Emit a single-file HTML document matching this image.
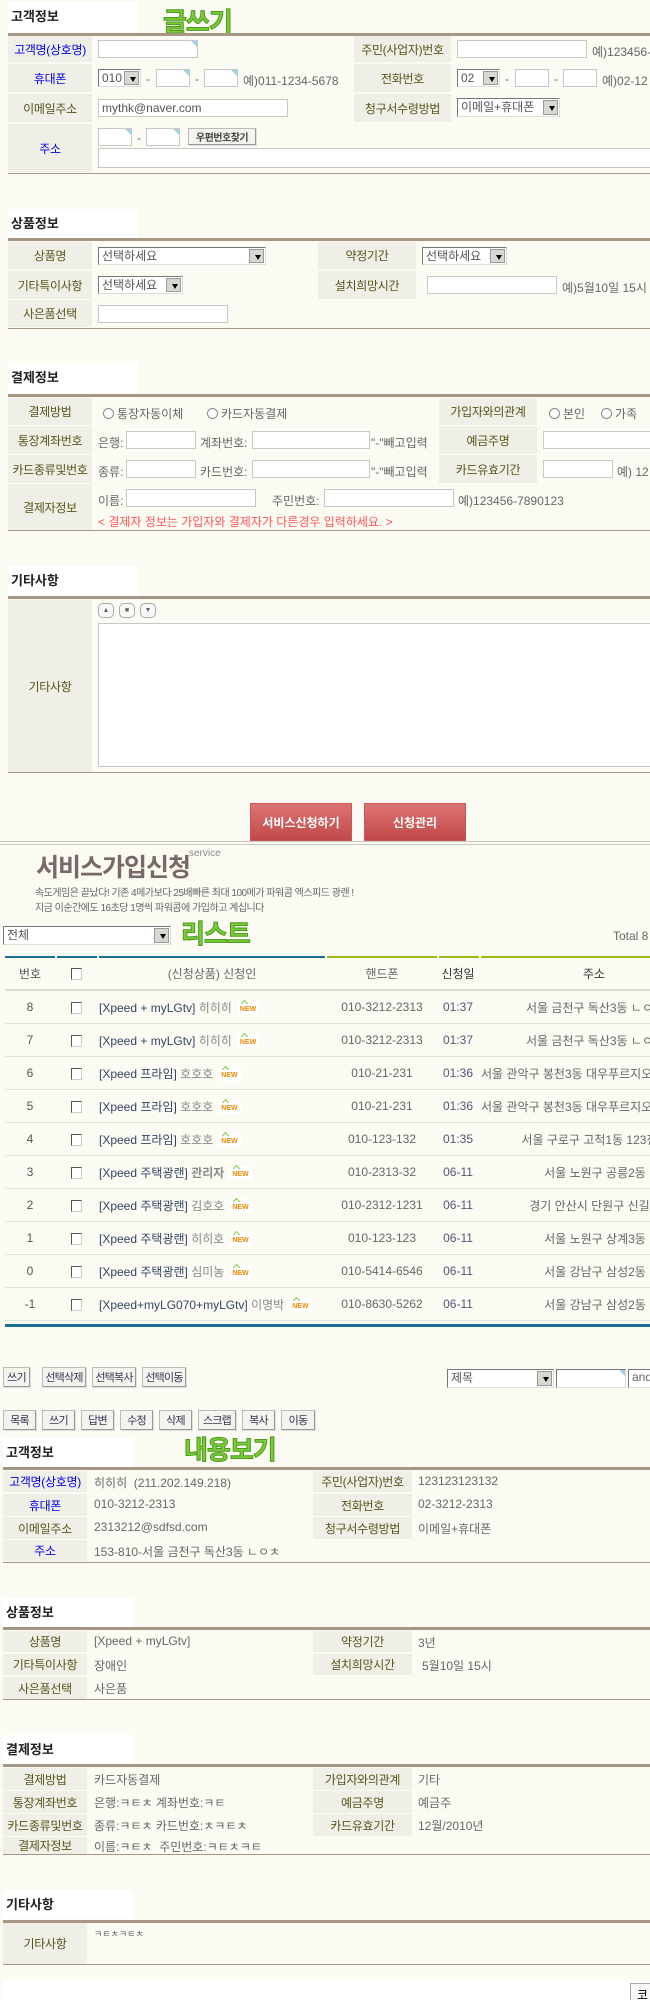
<!DOCTYPE html>
<html><head><meta charset="utf-8">
<style>
*{margin:0;padding:0;box-sizing:border-box}
html,body{width:650px;height:2000px;overflow:hidden}
body{background:#fbfbf3;position:relative;font-family:"Liberation Sans","Noto Sans CJK KR",sans-serif;font-size:12px;color:#666}
.a{position:absolute;white-space:nowrap}
.lab{position:absolute;background:#efefe8;color:#55551a;display:flex;align-items:center;justify-content:center;font-size:12px;white-space:nowrap;letter-spacing:-0.3px}
.blue{color:#0000ee}
.tb{position:absolute;background:#fff;font-weight:bold;color:#222;font-size:13px;padding:4px 0 0 3px}
.ln{position:absolute;left:8px;right:0;height:3px;background:#a89684}
.bl{position:absolute;left:8px;right:0;height:1px;background:#a89684}
.in{position:absolute;background:#fff;border:1px solid #c8c8c8}
.in.c::after{content:"";position:absolute;right:0;top:0;border-top:6px solid #9cd3ea;border-left:6px solid transparent}
.sel{position:absolute;background:#fff;border:1px solid #777;border-right-color:#ddd;border-bottom-color:#ddd;font-size:12px;color:#555;padding:1px 3px;line-height:14px;overflow:hidden;white-space:nowrap}
.sel::after{content:"";position:absolute;right:1px;top:1px;bottom:1px;width:13px;background:#d8d8d0;border:1px solid #999}
.sel i{position:absolute;right:4px;top:7px;z-index:2;border-top:5px solid #000;border-left:3px solid transparent;border-right:3px solid transparent}
.g{position:absolute;font-weight:bold;color:#7bcb3c;font-size:26px;-webkit-text-stroke:1px #4a9a1a;letter-spacing:-1px;line-height:28px}
.rad{display:inline-block;width:11px;height:11px;border-radius:50%;border:1px solid #888;background:#fff;vertical-align:-1px;margin-right:3px}
.btn{position:absolute;background:#f4f4ee;border:1px solid #bbb;border-right-color:#999;border-bottom-color:#999;color:#335;font-size:11px;letter-spacing:-0.8px;white-space:nowrap;display:flex;align-items:center;justify-content:center;box-shadow:1px 1px 0 #ddd;overflow:hidden}
.rb{position:absolute;background:linear-gradient(#dc7474,#c24848);color:#fff;font-weight:bold;font-size:12px;display:flex;align-items:center;justify-content:center;border:1px solid #c55}
.row{position:absolute;left:5px;width:710px;height:33px;border-bottom:1px solid #e2e2dc;display:flex;align-items:center;font-size:12px}
.row div{flex:none;white-space:nowrap;overflow:hidden}
.c1{width:50px;text-align:center;color:#555}
.c2{width:42px;text-align:center}
.c3{width:230px;padding-left:2px;color:#334466}
.c4{width:110px;text-align:center;color:#666}
.c5{width:42px;text-align:center;color:#557}
.c6{width:232px;text-align:center;color:#666}
.cb{display:inline-block;width:11px;height:12px;border:1px solid #555;border-right-color:#ccc;border-bottom-color:#ccc;background:#fff;vertical-align:middle}
.nm{color:#888}
.new{display:inline-block;background:#fff;color:#f08800;font-size:7px;font-weight:bold;padding:5px 3px 1px;margin-left:5px;position:relative;vertical-align:middle;line-height:8px}
.new::before{content:"";position:absolute;left:5px;top:0;width:4px;height:4px;border-top:1px solid #7c3;border-left:1px solid #7c3;transform:rotate(45deg)}
.v{position:absolute;color:#666;white-space:nowrap}
</style></head><body>

<div class="tb" style="left:8px;top:2px;width:130px;height:31px">고객정보</div>
<div class="g" style="left:163px;top:8px">글쓰기</div>
<div class="ln" style="top:33px"></div>
<div class="lab blue" style="left:8px;top:36px;width:84px;height:26px">고객명(상호명)</div>
<div class="lab blue" style="left:8px;top:64px;width:84px;height:28px">휴대폰</div>
<div class="lab" style="left:8px;top:94px;width:84px;height:28px">이메일주소</div>
<div class="lab blue" style="left:8px;top:124px;width:84px;height:48px">주소</div>
<div class="lab" style="left:354px;top:36px;width:97px;height:26px">주민(사업자)번호</div>
<div class="lab" style="left:354px;top:64px;width:97px;height:28px">전화번호</div>
<div class="lab" style="left:354px;top:94px;width:97px;height:28px">청구서수령방법</div>
<div class="in c" style="left:98px;top:40px;width:100px;height:18px"></div>
<div class="in" style="left:457px;top:40px;width:130px;height:18px"></div>
<div class="a" style="left:592px;top:43px">예)123456-</div>
<div class="sel" style="left:98px;top:69px;width:43px;height:18px">010<i></i></div>
<div class="a" style="left:146px;top:72px">-</div>
<div class="in c" style="left:156px;top:69px;width:34px;height:18px"></div>
<div class="a" style="left:195px;top:72px">-</div>
<div class="in c" style="left:204px;top:69px;width:34px;height:18px"></div>
<div class="a" style="left:243px;top:72px">예)011-1234-5678</div>
<div class="sel" style="left:457px;top:69px;width:43px;height:18px">02<i></i></div>
<div class="a" style="left:505px;top:72px">-</div>
<div class="in" style="left:515px;top:69px;width:34px;height:18px"></div>
<div class="a" style="left:554px;top:72px">-</div>
<div class="in" style="left:563px;top:69px;width:34px;height:18px"></div>
<div class="a" style="left:602px;top:72px">예)02-12</div>
<div class="in" style="left:98px;top:99px;width:190px;height:18px;color:#555;padding-left:3px;line-height:16px">mythk@naver.com</div>
<div class="sel" style="left:457px;top:98px;width:103px;height:19px">이메일+휴대폰<i></i></div>
<div class="in c" style="left:98px;top:128px;width:34px;height:18px"></div>
<div class="a" style="left:137px;top:131px">-</div>
<div class="in c" style="left:146px;top:128px;width:34px;height:18px"></div>
<div class="btn" style="left:188px;top:128px;width:68px;height:17px;font-size:10px;font-weight:bold;color:#444;letter-spacing:-0.5px">우편번호찾기</div>
<div class="in" style="left:98px;top:148px;width:560px;height:20px"></div>
<div class="bl" style="top:173px"></div>

<div class="tb" style="left:8px;top:209px;width:130px;height:29px">상품정보</div>
<div class="ln" style="top:238px"></div>
<div class="lab" style="left:8px;top:242px;width:84px;height:27px">상품명</div>
<div class="lab" style="left:8px;top:271px;width:84px;height:28px">기타특이사항</div>
<div class="lab" style="left:8px;top:300px;width:84px;height:27px">사은품선택</div>
<div class="lab" style="left:318px;top:242px;width:98px;height:27px">약정기간</div>
<div class="lab" style="left:318px;top:271px;width:98px;height:28px">설치희망시간</div>
<div class="sel" style="left:98px;top:247px;width:168px;height:18px">선택하세요<i></i></div>
<div class="sel" style="left:422px;top:247px;width:85px;height:18px">선택하세요<i></i></div>
<div class="sel" style="left:98px;top:276px;width:85px;height:18px">선택하세요<i></i></div>
<div class="in" style="left:427px;top:276px;width:130px;height:18px"></div>
<div class="a" style="left:562px;top:279px">예)5월10일 15시</div>
<div class="in" style="left:98px;top:305px;width:130px;height:18px"></div>
<div class="bl" style="top:328px"></div>

<div class="tb" style="left:8px;top:363px;width:130px;height:31px">결제정보</div>
<div class="ln" style="top:394px"></div>
<div class="lab" style="left:8px;top:398px;width:84px;height:27px">결제방법</div>
<div class="lab" style="left:8px;top:426px;width:84px;height:28px">통장계좌번호</div>
<div class="lab" style="left:8px;top:455px;width:84px;height:28px">카드종류및번호</div>
<div class="lab" style="left:8px;top:484px;width:84px;height:46px">결제자정보</div>
<div class="lab" style="left:439px;top:398px;width:98px;height:27px">가입자와의관계</div>
<div class="lab" style="left:439px;top:426px;width:98px;height:28px">예금주명</div>
<div class="lab" style="left:439px;top:455px;width:98px;height:28px">카드유효기간</div>
<div class="a" style="left:103px;top:405px"><span class="rad"></span>통장자동이체</div>
<div class="a" style="left:207px;top:405px"><span class="rad"></span>카드자동결제</div>
<div class="a" style="left:549px;top:405px"><span class="rad"></span>본인</div>
<div class="a" style="left:601px;top:405px"><span class="rad"></span>가족</div>
<div class="a" style="left:98px;top:434px">은행:</div>
<div class="in" style="left:126px;top:431px;width:70px;height:18px"></div>
<div class="a" style="left:200px;top:434px">계좌번호:</div>
<div class="in" style="left:252px;top:431px;width:118px;height:18px"></div>
<div class="a" style="left:371px;top:434px">"-"빼고입력</div>
<div class="in" style="left:543px;top:431px;width:120px;height:18px"></div>
<div class="a" style="left:98px;top:463px">종류:</div>
<div class="in" style="left:126px;top:460px;width:70px;height:18px"></div>
<div class="a" style="left:200px;top:463px">카드번호:</div>
<div class="in" style="left:252px;top:460px;width:118px;height:18px"></div>
<div class="a" style="left:371px;top:463px">"-"빼고입력</div>
<div class="in" style="left:543px;top:460px;width:70px;height:18px"></div>
<div class="a" style="left:617px;top:463px">예) 12</div>
<div class="a" style="left:98px;top:492px">이름:</div>
<div class="in" style="left:126px;top:489px;width:130px;height:18px"></div>
<div class="a" style="left:272px;top:492px">주민번호:</div>
<div class="in" style="left:324px;top:489px;width:130px;height:18px"></div>
<div class="a" style="left:458px;top:492px">예)123456-7890123</div>
<div class="a" style="left:98px;top:513px;color:#ff5555">&lt; 결제자 정보는 가입자와 결제자가 다른경우 입력하세요. &gt;</div>
<div class="bl" style="top:530px"></div>

<div class="tb" style="left:8px;top:566px;width:130px;height:31px">기타사항</div>
<div class="ln" style="top:596px"></div>
<div class="lab" style="left:8px;top:600px;width:84px;height:172px">기타사항</div>
<div class="a" style="left:98px;top:603px;width:16px;height:15px;border:1px solid #aaa;border-radius:5px;background:#f8f8f8;font-size:7px;text-align:center;line-height:13px;color:#666">▲</div>
<div class="a" style="left:119px;top:603px;width:16px;height:15px;border:1px solid #aaa;border-radius:5px;background:#f8f8f8;font-size:7px;text-align:center;line-height:13px;color:#666">■</div>
<div class="a" style="left:140px;top:603px;width:16px;height:15px;border:1px solid #aaa;border-radius:5px;background:#f8f8f8;font-size:7px;text-align:center;line-height:13px;color:#666">▼</div>
<div class="in" style="left:98px;top:623px;width:560px;height:144px"></div>
<div class="bl" style="top:772px"></div>

<div class="rb" style="left:250px;top:803px;width:102px;height:38px">서비스신청하기</div>
<div class="rb" style="left:364px;top:803px;width:102px;height:38px">신청관리</div>

<div class="a" style="left:0;top:841px;width:650px;height:4px;border-top:1px solid #c8c8c0;border-bottom:1px solid #c8c8c0"></div>
<div class="a" style="left:36px;top:848px;font-size:25px;font-weight:bold;color:#7a6868;letter-spacing:-1px">서비스가입신청</div>
<div class="a" style="left:189px;top:848px;font-size:10px;color:#888">service</div>
<div class="a" style="left:35px;top:884px;font-size:10px;color:#666;letter-spacing:-0.5px">속도게임은 끝났다! 기존 4메가보다 25배빠른 최대 100메가 파워콤 엑스피드 광랜 !</div>
<div class="a" style="left:35px;top:899px;font-size:10px;color:#666;letter-spacing:-0.5px">지금 이순간에도 16초당 1명씩 파워콤에 가입하고 계십니다</div>
<div class="sel" style="left:3px;top:926px;width:168px;height:19px">전체<i></i></div>
<div class="g" style="left:181px;top:920px">리스트</div>
<div class="a" style="left:613px;top:929px;color:#666">Total 8</div>
<div class="a" style="left:5px;top:956px;width:50px;height:2px;background:#1c6f94"></div>
<div class="a" style="left:57px;top:956px;width:40px;height:2px;background:#1c6f94"></div>
<div class="a" style="left:99px;top:956px;width:226px;height:2px;background:#1c6f94"></div>
<div class="a" style="left:327px;top:956px;width:110px;height:2px;background:#9dba16"></div>
<div class="a" style="left:439px;top:956px;width:40px;height:2px;background:#9dba16"></div>
<div class="a" style="left:481px;top:956px;width:170px;height:2px;background:#9dba16"></div>
<div class="row" style="top:958px;height:33px;border-bottom:2px solid #dcdcd6">
<div class="c1">번호</div><div class="c2"><span class="cb"></span></div><div class="c3" style="text-align:center;color:#666;padding:0">(신청상품) 신청인</div><div class="c4">핸드폰</div><div class="c5" style="color:#333">신청일</div><div class="c6" style="color:#333;width:230px">주소</div></div>

<div class="row" style="top:991px"><div class="c1">8</div><div class="c2"><span class="cb"></span></div><div class="c3">[Xpeed + myLGtv] <span class="nm">히히히</span><span class="new">NEW</span></div><div class="c4">010-3212-2313</div><div class="c5">01:37</div><div class="c6">서울 금천구 독산3동 ㄴㅇㅊ</div></div>
<div class="row" style="top:1024px"><div class="c1">7</div><div class="c2"><span class="cb"></span></div><div class="c3">[Xpeed + myLGtv] <span class="nm">히히히</span><span class="new">NEW</span></div><div class="c4">010-3212-2313</div><div class="c5">01:37</div><div class="c6">서울 금천구 독산3동 ㄴㅇㅊ</div></div>
<div class="row" style="top:1057px"><div class="c1">6</div><div class="c2"><span class="cb"></span></div><div class="c3">[Xpeed 프라임] <span class="nm">호호호</span><span class="new">NEW</span></div><div class="c4">010-21-231</div><div class="c5">01:36</div><div class="c6" style="text-align:left;padding-left:2px">서울 관악구 봉천3동 대우푸르지오</div></div>
<div class="row" style="top:1090px"><div class="c1">5</div><div class="c2"><span class="cb"></span></div><div class="c3">[Xpeed 프라임] <span class="nm">호호호</span><span class="new">NEW</span></div><div class="c4">010-21-231</div><div class="c5">01:36</div><div class="c6" style="text-align:left;padding-left:2px">서울 관악구 봉천3동 대우푸르지오</div></div>
<div class="row" style="top:1123px"><div class="c1">4</div><div class="c2"><span class="cb"></span></div><div class="c3">[Xpeed 프라임] <span class="nm">호호호</span><span class="new">NEW</span></div><div class="c4">010-123-132</div><div class="c5">01:35</div><div class="c6">서울 구로구 고척1동 123전화</div></div>
<div class="row" style="top:1156px"><div class="c1">3</div><div class="c2"><span class="cb"></span></div><div class="c3">[Xpeed 주택광랜] <b class="nm">관리자</b><span class="new">NEW</span></div><div class="c4">010-2313-32</div><div class="c5">06-11</div><div class="c6">서울 노원구 공릉2동</div></div>
<div class="row" style="top:1189px"><div class="c1">2</div><div class="c2"><span class="cb"></span></div><div class="c3">[Xpeed 주택광랜] <span class="nm">김호호</span><span class="new">NEW</span></div><div class="c4">010-2312-1231</div><div class="c5">06-11</div><div class="c6">경기 안산시 단원구 신길동</div></div>
<div class="row" style="top:1222px"><div class="c1">1</div><div class="c2"><span class="cb"></span></div><div class="c3">[Xpeed 주택광랜] <span class="nm">히히호</span><span class="new">NEW</span></div><div class="c4">010-123-123</div><div class="c5">06-11</div><div class="c6">서울 노원구 상계3동</div></div>
<div class="row" style="top:1255px"><div class="c1">0</div><div class="c2"><span class="cb"></span></div><div class="c3">[Xpeed 주택광랜] <span class="nm">심미농</span><span class="new">NEW</span></div><div class="c4">010-5414-6546</div><div class="c5">06-11</div><div class="c6">서울 강남구 삼성2동</div></div>
<div class="row" style="top:1288px"><div class="c1">-1</div><div class="c2"><span class="cb"></span></div><div class="c3">[Xpeed+myLG070+myLGtv] <span class="nm">이명박</span><span class="new">NEW</span></div><div class="c4">010-8630-5262</div><div class="c5">06-11</div><div class="c6">서울 강남구 삼성2동</div></div>
<div class="a" style="left:5px;top:1324px;width:650px;height:3px;background:#1c6f94"></div>

<div class="btn" style="left:3px;top:1367px;width:27px;height:20px">쓰기</div>
<div class="btn" style="left:42px;top:1367px;width:44px;height:20px">선택삭제</div>
<div class="btn" style="left:92px;top:1367px;width:44px;height:20px">선택복사</div>
<div class="btn" style="left:142px;top:1367px;width:44px;height:20px">선택이동</div>
<div class="sel" style="left:447px;top:1369px;width:107px;height:19px">제목<i></i></div>
<div class="in c" style="left:556px;top:1369px;width:70px;height:19px;border-color:#777 #ddd #ddd #777"></div>
<div class="in" style="left:628px;top:1369px;width:40px;height:19px;border-color:#777 #ddd #ddd #777;padding-left:3px;color:#666">and</div>

<div class="btn" style="left:3px;top:1410px;width:33px;height:20px">목록</div>
<div class="btn" style="left:42px;top:1410px;width:33px;height:20px">쓰기</div>
<div class="btn" style="left:81px;top:1410px;width:33px;height:20px">답변</div>
<div class="btn" style="left:120px;top:1410px;width:33px;height:20px">수정</div>
<div class="btn" style="left:159px;top:1410px;width:33px;height:20px">삭제</div>
<div class="btn" style="left:198px;top:1410px;width:38px;height:20px">스크랩</div>
<div class="btn" style="left:242px;top:1410px;width:33px;height:20px">복사</div>
<div class="btn" style="left:281px;top:1410px;width:34px;height:20px">이동</div>

<div class="tb" style="left:3px;top:1438px;width:130px;height:29px">고객정보</div>
<div class="g" style="left:184px;top:1436px">내용보기</div>
<div class="ln" style="left:3px;top:1467px"></div>
<div class="lab blue" style="left:3px;top:1471px;width:84px;height:21px">고객명(상호명)</div>
<div class="lab blue" style="left:3px;top:1494px;width:84px;height:22px">휴대폰</div>
<div class="lab" style="left:3px;top:1517px;width:84px;height:22px">이메일주소</div>
<div class="lab blue" style="left:3px;top:1540px;width:84px;height:21px">주소</div>
<div class="lab" style="left:313px;top:1471px;width:99px;height:21px">주민(사업자)번호</div>
<div class="lab" style="left:313px;top:1494px;width:99px;height:22px">전화번호</div>
<div class="lab" style="left:313px;top:1517px;width:99px;height:22px">청구서수령방법</div>
<div class="v" style="left:94px;top:1474px">히히히 &nbsp;(211.202.149.218)</div>
<div class="v" style="left:94px;top:1497px">010-3212-2313</div>
<div class="v" style="left:94px;top:1520px">2313212@sdfsd.com</div>
<div class="v" style="left:94px;top:1543px">153-810-서울 금천구 독산3동 ㄴㅇㅊ</div>
<div class="v" style="left:418px;top:1474px">123123123132</div>
<div class="v" style="left:418px;top:1497px">02-3212-2313</div>
<div class="v" style="left:418px;top:1520px">이메일+휴대폰</div>
<div class="bl" style="left:3px;top:1562px"></div>

<div class="tb" style="left:3px;top:1598px;width:130px;height:29px">상품정보</div>
<div class="ln" style="left:3px;top:1627px"></div>
<div class="lab" style="left:3px;top:1631px;width:84px;height:21px">상품명</div>
<div class="lab" style="left:3px;top:1654px;width:84px;height:21px">기타특이사항</div>
<div class="lab" style="left:3px;top:1677px;width:84px;height:22px">사은품선택</div>
<div class="lab" style="left:313px;top:1631px;width:99px;height:21px">약정기간</div>
<div class="lab" style="left:313px;top:1654px;width:99px;height:21px">설치희망시간</div>
<div class="v" style="left:94px;top:1634px">[Xpeed + myLGtv]</div>
<div class="v" style="left:94px;top:1657px">장애인</div>
<div class="v" style="left:94px;top:1680px">사은품</div>
<div class="v" style="left:418px;top:1634px">3년</div>
<div class="v" style="left:422px;top:1657px">5월10일 15시</div>
<div class="bl" style="left:3px;top:1699px"></div>

<div class="tb" style="left:3px;top:1735px;width:130px;height:29px">결제정보</div>
<div class="ln" style="left:3px;top:1764px"></div>
<div class="lab" style="left:3px;top:1768px;width:84px;height:22px">결제방법</div>
<div class="lab" style="left:3px;top:1791px;width:84px;height:22px">통장계좌번호</div>
<div class="lab" style="left:3px;top:1814px;width:84px;height:22px">카드종류및번호</div>
<div class="lab" style="left:3px;top:1837px;width:84px;height:17px">결제자정보</div>
<div class="lab" style="left:313px;top:1768px;width:99px;height:22px">가입자와의관계</div>
<div class="lab" style="left:313px;top:1791px;width:99px;height:22px">예금주명</div>
<div class="lab" style="left:313px;top:1814px;width:99px;height:22px">카드유효기간</div>
<div class="v" style="left:94px;top:1771px">카드자동결제</div>
<div class="v" style="left:94px;top:1794px">은행:ㅋㅌㅊ 계좌번호:ㅋㅌ</div>
<div class="v" style="left:94px;top:1817px">종류:ㅋㅌㅊ 카드번호:ㅊㅋㅌㅊ</div>
<div class="v" style="left:94px;top:1838px">이름:ㅋㅌㅊ &nbsp;주민번호:ㅋㅌㅊㅋㅌ</div>
<div class="v" style="left:418px;top:1771px">기타</div>
<div class="v" style="left:418px;top:1794px">예금주</div>
<div class="v" style="left:418px;top:1817px">12월/2010년</div>
<div class="bl" style="left:3px;top:1854px"></div>

<div class="tb" style="left:3px;top:1890px;width:130px;height:29px">기타사항</div>
<div class="ln" style="left:3px;top:1920px"></div>
<div class="lab" style="left:3px;top:1923px;width:84px;height:41px">기타사항</div>
<div class="v" style="left:94px;top:1927px;font-size:9px">ㅋㅌㅊㅋㅌㅊ</div>
<div class="bl" style="left:3px;top:1964px"></div>

<div class="a" style="left:3px;top:1979px;width:647px;height:21px;background:#fff"></div>
<div class="a" style="left:630px;top:1983px;width:30px;height:20px;border:1px solid #aaa;background:#f8f8f8;color:#000;padding:2px 0 0 6px">코</div>
</body></html>
